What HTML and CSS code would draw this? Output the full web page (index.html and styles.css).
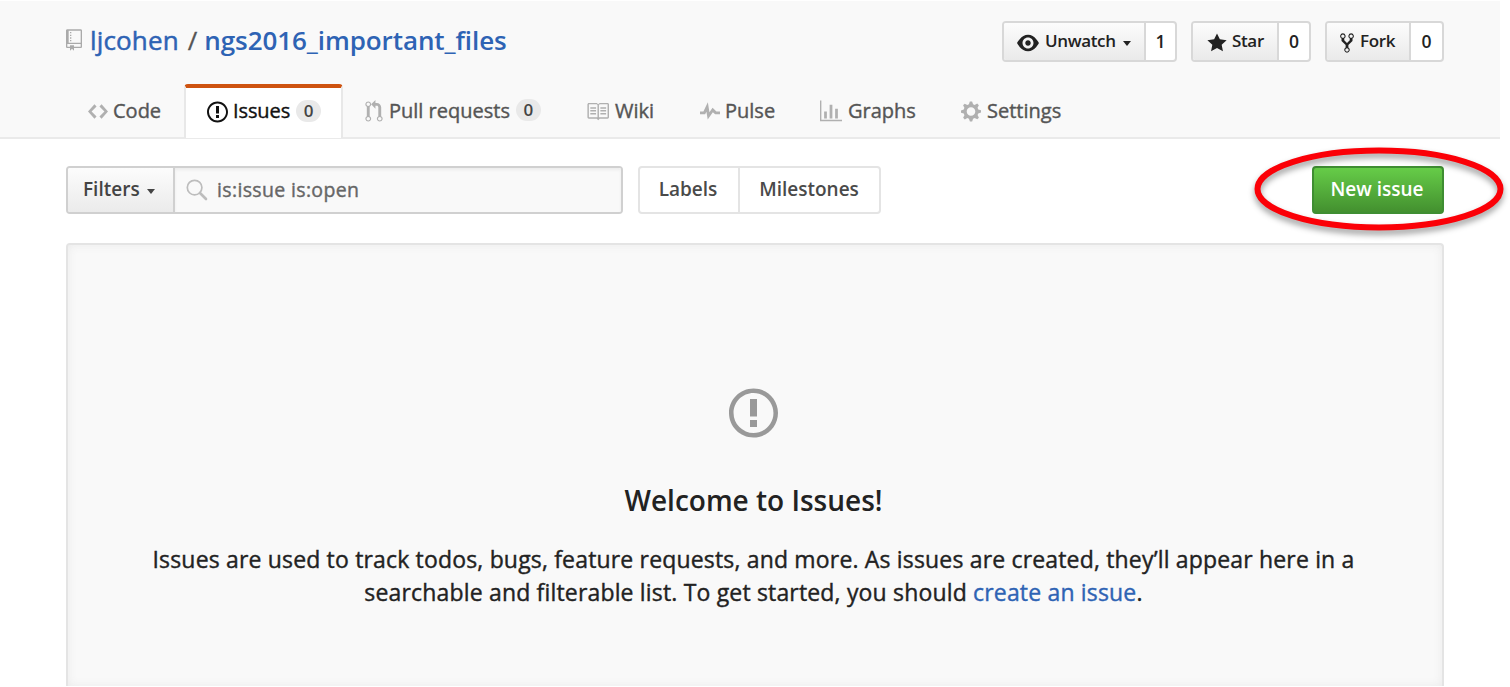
FILE: index.html
```html
<!DOCTYPE html>
<html lang="en">
<head>
<meta charset="utf-8">
<title>Issues · ljcohen/ngs2016_important_files</title>
<link rel="stylesheet" href="styles.css">
</head>
<body>
<header class="repo-header">
  <div class="title-row">
    <h1 class="repo-title">
      <svg class="repo-icon" viewBox="0 0 12 16"><path d="M4 9H3V8h1v1zm0-3H3v1h1V6zm0-2H3v1h1V4zm0-2H3v1h1V2zm8-1v12c0 .55-.45 1-1 1H6v2l-1.5-1.5L3 16v-2H1c-.55 0-1-.45-1-1V1c0-.55.45-1 1-1h10c.55 0 1 .45 1 1zm-1 10H1v2h2v-1h3v1h5v-2zm0-10H2v9h9V1z"/></svg>
      <a class="owner" href="#">ljcohen</a><span class="slash">/</span><a class="repo" href="#">ngs2016_important_files</a>
    </h1>
    <div class="actions">
      <div class="action watch"><a class="action-btn" href="#"><svg width="22" height="22" viewBox="0 0 16 16"><path d="M8.06 2C3 2 0 8 0 8s3 6 8.06 6C13 14 16 8 16 8s-3-6-7.94-6zM8 12c-2.2 0-4-1.78-4-4 0-2.2 1.8-4 4-4 2.22 0 4 1.8 4 4 0 2.22-1.78 4-4 4zm2-4c0 1.11-.89 2-2 2-1.11 0-2-.89-2-2 0-1.11.89-2 2-2 1.11 0 2 .89 2 2z"/></svg><span>Unwatch</span><i class="caret"></i></a><a class="count" href="#">1</a></div>
      <div class="action star"><a class="action-btn" href="#"><svg width="20" height="22" viewBox="0 0 14 16"><path d="M14 6l-4.9-.64L7 1 4.9 5.36 0 6l3.6 3.26L2.67 14 7 11.67 11.33 14l-.93-4.74z"/></svg><span>Star</span></a><a class="count" href="#">0</a></div>
      <div class="action fork"><a class="action-btn" href="#"><svg width="14" height="22" viewBox="0 0 10 16"><path d="M8 1a1.993 1.993 0 0 0-1 3.72V6L5 8 3 6V4.72A1.993 1.993 0 0 0 2 1a1.993 1.993 0 0 0-1 3.72V6.5l3 3v1.78A1.993 1.993 0 0 0 5 15a1.993 1.993 0 0 0 1-3.72V9.5l3-3V4.72A1.993 1.993 0 0 0 8 1zM2 4.2C1.34 4.2.8 3.65.8 3c0-.65.55-1.2 1.2-1.2.65 0 1.2.55 1.2 1.2 0 .65-.55 1.2-1.2 1.2zm3 10c-.66 0-1.2-.55-1.2-1.2 0-.65.55-1.2 1.2-1.2.65 0 1.2.55 1.2 1.2 0 .65-.55 1.2-1.2 1.2zm3-10c-.66 0-1.2-.55-1.2-1.2 0-.65.55-1.2 1.2-1.2.65 0 1.2.55 1.2 1.2 0 .65-.55 1.2-1.2 1.2z"/></svg><span>Fork</span></a><a class="count" href="#">0</a></div>
    </div>
  </div>
  <nav class="tabs">
    <a class="tab tab-code" href="#"><svg width="20" height="23" viewBox="0 0 14 16"><path d="M9.5 3L8 4.5 11.5 8 8 11.5 9.5 13 14 8 9.5 3zm-5 0L0 8l4.5 5L6 11.5 2.5 8 6 4.5 4.5 3z"/></svg><span>Code</span></a>
    <a class="tab tab-issues selected" href="#"><svg width="21" height="24" viewBox="0 0 14 16"><path d="M7 2.3c3.14 0 5.7 2.56 5.7 5.7s-2.56 5.7-5.7 5.7A5.71 5.71 0 0 1 1.3 8c0-3.14 2.56-5.7 5.7-5.7zM7 1C3.14 1 0 4.14 0 8s3.14 7 7 7 7-3.14 7-7-3.14-7-7-7zm1 3H6v5h2V4zm0 6H6v2h2v-2z"/></svg><span>Issues</span><b class="counter">0</b></a>
    <a class="tab tab-pulls" href="#"><svg width="18" height="23" viewBox="0 0 12 16"><path d="M11 11.28V5c-.03-.78-.34-1.47-.94-2.06C9.46 2.35 8.78 2.03 8 2H7V0L4 3l3 3V4h1c.27.02.48.11.69.31.21.2.3.42.31.69v6.28A1.993 1.993 0 0 0 10 15a1.993 1.993 0 0 0 1-3.72zm-1 2.92c-.66 0-1.2-.55-1.2-1.2 0-.65.55-1.2 1.2-1.2.65 0 1.2.55 1.2 1.2 0 .65-.55 1.2-1.2 1.2zM4 3c0-1.11-.89-2-2-2a1.993 1.993 0 0 0-1 3.72v6.56A1.993 1.993 0 0 0 2 15a1.993 1.993 0 0 0 1-3.72V4.72c.59-.34 1-.98 1-1.72zm-.8 10c0 .66-.55 1.2-1.2 1.2-.65 0-1.2-.55-1.2-1.2 0-.65.55-1.2 1.2-1.2.65 0 1.2.55 1.2 1.2zM2 4.2C1.34 4.2.8 3.65.8 3c0-.65.55-1.2 1.2-1.2.65 0 1.2.55 1.2 1.2 0 .65-.55 1.2-1.2 1.2z"/></svg><span>Pull requests</span><b class="counter">0</b></a>
    <a class="tab tab-wiki" href="#"><svg width="23" height="23" viewBox="0.7 0 16 16"><path d="M3 5h4v1H3V5zm0 3h4V7H3v1zm0 2h4V9H3v1zm11-5h-4v1h4V5zm0 2h-4v1h4V7zm0 2h-4v1h4V9zm2-6v9c0 .55-.45 1-1 1H9.5l-1 1-1-1H2c-.55 0-1-.45-1-1V3c0-.55.45-1 1-1h5.5l1 1 1-1H15c.55 0 1 .45 1 1zm-8 .5L7.5 3H2v9h6V3.5zm7-.5H9.5l-.5.5V12h6V3z"/></svg><span>Wiki</span></a>
    <a class="tab tab-pulse" href="#"><svg width="20" height="23" viewBox="0 0 14 16"><path d="M11.5 8L8.8 5.4 6.6 8.5 5.5 1.6 2.38 8H0v2h3.6l.9-1.8.9 5.4L9 8.5l1.6 1.5H14V8z"/></svg><span>Pulse</span></a>
    <a class="tab tab-graphs" href="#"><svg width="22" height="23" viewBox="0 0 16 16"><path d="M16 14v1H0V0h1v14h15zM5 13H3V8h2v5zm4 0H7V3h2v10zm4 0h-2V6h2v7z"/></svg><span>Graphs</span></a>
    <a class="tab tab-settings" href="#"><svg width="20" height="23" viewBox="0 0 14 16"><path d="M14 8.77v-1.6l-1.94-.64-.45-1.09.88-1.84-1.13-1.13-1.81.91-1.09-.45-.69-1.92h-1.6l-.63 1.94-1.11.45-1.84-.88-1.13 1.13.91 1.81-.45 1.09L0 7.23v1.59l1.94.64.45 1.09-.88 1.84 1.13 1.13 1.81-.91 1.09.45.69 1.92h1.59l.63-1.94 1.11-.45 1.84.88 1.13-1.13-.92-1.81.47-1.09L14 8.75v.02zM7 11c-1.66 0-3-1.34-3-3s1.34-3 3-3 3 1.34 3 3-1.34 3-3 3z"/></svg><span>Settings</span></a>
  </nav>
</header>
<main class="content">
  <div class="toolbar">
    <div class="search">
      <a class="filters" href="#"><span>Filters</span><i class="caret"></i></a>
      <div class="query"><svg width="22" height="22" viewBox="0 0 22 22"><circle cx="8.6" cy="8.6" r="7.3" fill="none" stroke="#bdbdbd" stroke-width="1.7"/><path d="M14 14l6 6" stroke="#bdbdbd" stroke-width="2.6" stroke-linecap="round"/></svg><span>is:issue is:open</span></div>
    </div>
    <div class="links"><a class="labels" href="#">Labels</a><a class="milestones" href="#">Milestones</a></div>
    <div class="new-wrap"><a class="new-issue" href="#">New issue</a>
      <svg class="marker" width="270" height="110" viewBox="0 0 270 110"><ellipse cx="138" cy="59" rx="121.5" ry="38.5" fill="none" stroke="#fb0007" stroke-width="6"/></svg>
    </div>
  </div>
  <section class="blankslate">
    <svg class="blank-icon" width="49" height="56" viewBox="0 0 14 16"><path d="M7 2.3c3.14 0 5.7 2.56 5.7 5.7s-2.56 5.7-5.7 5.7A5.71 5.71 0 0 1 1.3 8c0-3.14 2.56-5.7 5.7-5.7zM7 1C3.14 1 0 4.14 0 8s3.14 7 7 7 7-3.14 7-7-3.14-7-7-7zm1 3H6v5h2V4zm0 6H6v2h2v-2z"/></svg>
    <h2>Welcome to Issues!</h2>
    <p class="line1">Issues are used to track todos, bugs, feature requests, and more. As issues are created, they’ll appear here in a</p>
    <p class="line2">searchable and filterable list. To get started, you should <a href="#">create an issue</a>.</p>
  </section>
</main>
</body>
</html>
```
FILE: styles.css
```css
* { box-sizing: border-box; }
body {
  margin: 0;
  height: 687px;
  overflow: hidden;
  background: #fff;
  color: #222;
  font-family: "Open Sans", "Noto Sans", sans-serif;
  font-weight: 400;
  white-space: nowrap;
}
a { color: inherit; text-decoration: none; }
svg { flex: none; fill: currentColor; display: block; }

.repo-header {
  width: 1500px;
  height: 138px;
  margin-top: 1px;
  padding-left: 66px;
  background: #f9f9f9;
  border-bottom: 2px solid #eaeaea;
}
.title-row { display: flex; justify-content: space-between; width: 1378px; height: 83px; padding-top: 20px; }
.repo-title { display: flex; margin: 0; height: 38px; align-items: center; font-size: 26px; font-weight: 400; color: #2e63b4; }
.repo-icon { width: 16px; height: 22px; margin-right: 8px; fill: #aaa; }
.owner { letter-spacing: .15px; -webkit-text-stroke: .5px currentColor; }
.slash { margin: 0 7px 0 9px; color: #555; -webkit-text-stroke: .3px currentColor; }
.repo { font-weight: 600; letter-spacing: -.08px; }

.actions { display: flex; height: 41px; }
.action { display: flex; border: 2px solid #d8d8d8; border-radius: 4px; background: #fff; font-size: 17.5px; font-weight: 600; overflow: hidden; }
.action-btn { display: flex; align-items: center; background: linear-gradient(#fcfcfc, #eaeaea); border-right: 2px solid #d8d8d8; }
.watch { width: 175px; margin-right: 14px; }
.star { width: 120px; margin-right: 14px; }
.fork { width: 119px; }
.watch .action-btn { width: 142px; padding-left: 13px; }
.star .action-btn { width: 86px; padding-left: 14px; }
.fork .action-btn { width: 84px; padding-left: 13px; }
.action-btn svg { position: relative; top: 1.5px; }
.action-btn span { margin-left: 6px; font-size: 17px; letter-spacing: -.35px; padding-bottom: 2px; }
.star .action-btn span { margin-left: 5px; }
.count { flex: 1; display: flex; align-items: center; justify-content: center; padding-bottom: 2px; }
.caret { border: 4.5px solid transparent; border-top: 5px solid currentColor; border-bottom: 0; margin: 4px 0 0 7px; }

.tabs { display: grid; grid-template-columns: 119px 158px 222px 113px 120px 141px 130px; height: 54px; font-size: 20px; color: #555; -webkit-text-stroke: .4px currentColor; }
.tab { display: flex; align-items: center; padding: 0 0 2px 22px; height: 54px; }
.tab svg { fill: #b0b0b0; -webkit-text-stroke: 0; position: relative; top: 1px; }
.tab span { margin-left: 6px; }
.tab-code span, .tab-wiki span, .tab-pulse span { margin-left: 5px; }
.tab.selected { background: #fff; border: 2px solid #e8e8e8; border-top: 4px solid #ce5310; border-bottom: 0; border-radius: 4px 4px 0 0; margin-left: -1px; padding: 0 0 5px 21px; width: 159px; color: #111; }
.tab.selected svg { fill: #111; }
.tab-issues span { margin-left: 5px; letter-spacing: -.1px; }
.counter { width: 25px; height: 22px; margin-left: 6px; border-radius: 11px; background: #e9e9e9; color: #444; font-size: 17px; line-height: 22px; font-weight: 600; text-align: center; -webkit-text-stroke: 0; }

.content { padding: 27px 0 0 66px; width: 1444px; }
.toolbar { display: flex; height: 48px; font-size: 19px; color: #4a4a4a; }
.search { display: flex; width: 557px; border: 2px solid #d0d0d0; border-radius: 4px; overflow: hidden; }
.filters { display: flex; align-items: center; width: 107px; padding: 0 0 2px 15px; border-right: 2px solid #d0d0d0; background: linear-gradient(#fcfcfc, #ebebeb); font-weight: 600; color: #444; }
.query { display: flex; flex: 1; align-items: center; padding-left: 11px; background: #f9f9f9; box-shadow: inset 0 2px 3px #ececec; color: #666; }
.query span { margin-left: 9px; padding-bottom: 2px; font-size: 19.5px; letter-spacing: .35px; -webkit-text-stroke: .4px currentColor; }
.links { display: flex; width: 243px; margin-left: 15px; border: 2px solid #e4e4e4; border-radius: 4px; font-weight: 600; }
.links a { display: flex; align-items: center; justify-content: center; padding-bottom: 2px; }
.links .labels { width: 100px; padding-right: 2px; border-right: 2px solid #e4e4e4; }
.links .milestones { flex: 1; padding-right: 1px; }
.new-wrap { position: relative; margin-left: auto; }
.new-issue { display: flex; width: 132px; height: 48px; align-items: center; justify-content: center; padding: 0 2px 2px 0; border: 2px solid #3f8e32; border-radius: 4px; background: linear-gradient(#66cc48, #43902f); color: #fff; font-weight: 600; }
.marker { position: absolute; left: -71px; top: -36px; filter: drop-shadow(0 4px 3px rgba(0,0,0,.4)); }

.blankslate { display: flex; flex-direction: column; align-items: center; width: 1378px; height: 443px; margin-top: 29px; padding: 140px 3px 0 0; border: 2px solid #e4e4e4; border-bottom: 0; border-radius: 4px 4px 0 0; background: #f9f9f9; box-shadow: inset 0 0 10px #eaeaea; }
.blank-icon { fill: #999; }
.blankslate h2 { margin: 39px 0 0; font-size: 28px; line-height: 40px; font-weight: 600; }
.blankslate p { margin: 0; font-size: 23px; line-height: 33px; letter-spacing: .17px; -webkit-text-stroke: .4px currentColor; }
.blankslate .line1 { margin-top: 23px; }
.blankslate p a { color: #2e63b4; }
```
